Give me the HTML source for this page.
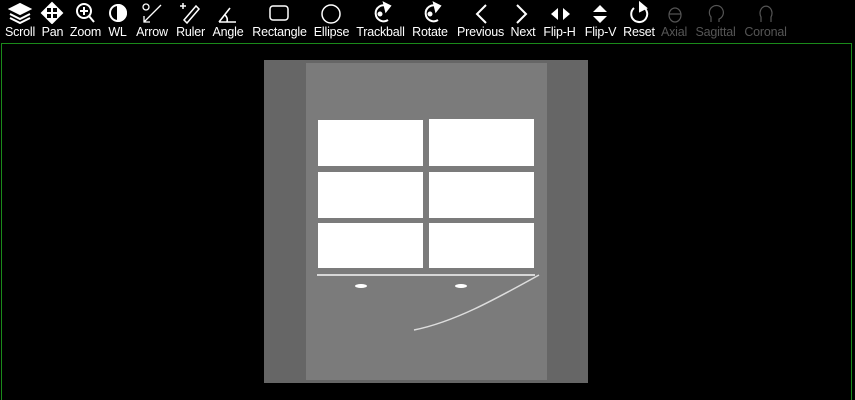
<!DOCTYPE html>
<html style="overflow:hidden;height:400px"><head><meta charset="utf-8"><style>
body{margin:0;width:855px;height:400px;background:#000;overflow:hidden;position:relative;font-family:"Liberation Sans",sans-serif}
.l{position:absolute;top:25px;font-size:12.5px;color:#fff;text-align:center;white-space:nowrap;letter-spacing:-0.2px}
.d{color:#555}
.vp{position:absolute;left:1px;top:43px;width:849px;height:356px;border:1px solid #1a8a1a;border-bottom:none}
</style></head><body>
<div class="vp"></div>
<svg width="855" height="24" style="position:absolute;left:0;top:0" fill="none" stroke="#fff" stroke-width="2">
<path d="M10 9 L20 4 L30 9 L20 14Z" fill="#fff"/><path d="M10 14 L20 19 L30 14" /><path d="M10 18 L20 23 L30 18"/>
<path d="M52 4 V22 M43 13 H61" /><path d="M48 7 L52 3 L56 7Z M48 19 L52 23 L56 19Z M46 9 L42 13 L46 17Z M58 9 L62 13 L58 17Z" fill="#fff"/>
<circle cx="84" cy="11" r="7"/><path d="M89 16 L94 22 M84 7 V15 M80 11 H88"/>
<circle cx="118" cy="13" r="8"/><path d="M118 5 A8 8 0 0 1 118 21Z" fill="#fff"/>
<g stroke-width="1.3"><circle cx="146" cy="7" r="3"/><path d="M161 5 L144 22 M144 16 V22 H150"/></g>
<g stroke-width="1.5"><path d="M180 6 H186 M183 3 V9"/><path d="M184 20 L196 6 L199 9 L187 23Z"/></g>
<path d="M219 22 H236 M219 22 L230 8 M225 15 A7 7 0 0 1 227 22" stroke-width="1.6"/>
<rect x="270" y="6" width="18" height="14" rx="3" stroke-width="1.5"/>
<circle cx="331" cy="14" r="9" stroke-width="1.5"/>
<path d="M387 6 A8 8 0 1 0 388 20" stroke-width="2"/><path d="M384 3 L390 6 L386 11Z" fill="#fff"/><circle cx="380" cy="14" r="1.5" fill="#fff"/>
<path d="M437 6 A8 8 0 1 0 438 20" stroke-width="2"/><path d="M434 3 L440 6 L436 11Z" fill="#fff"/><circle cx="430" cy="14" r="1.5" fill="#fff"/>
<path d="M486 5 L477 14 L486 23" stroke-width="2"/><path d="M517 5 L526 14 L517 23" stroke-width="2"/>
<path d="M558 8 L551 14 L558 20Z M563 8 L570 14 L563 20Z" fill="#fff" stroke="none"/>
<path d="M593 12 L600 5 L607 12Z M593 16 L600 23 L607 16Z" fill="#fff" stroke="none"/>
<path d="M634 8 A8 8 0 1 0 643 7" stroke-width="2"/><path d="M640 3 L646 8 L640 11Z" fill="#fff"/>
<g stroke="#555" stroke-width="1.2"><ellipse cx="675" cy="15" rx="6" ry="7"/><path d="M669 14 H681"/>
<path d="M711 22 V17 A7 7 0 1 1 719 19 V22"/><path d="M761 22 V17 A6 7 0 1 1 771 17 V22"/></g>
</svg>
<span class="l" style="left:3px;width:34px">Scroll</span>
<span class="l" style="left:41px;width:23px">Pan</span>
<span class="l" style="left:68px;width:35px">Zoom</span>
<span class="l" style="left:107px;width:21px">WL</span>
<span class="l" style="left:133px;width:38px">Arrow</span>
<span class="l" style="left:174px;width:33px">Ruler</span>
<span class="l" style="left:210px;width:36px">Angle</span>
<span class="l" style="left:250px;width:59px">Rectangle</span>
<span class="l" style="left:312px;width:39px">Ellipse</span>
<span class="l" style="left:354px;width:53px">Trackball</span>
<span class="l" style="left:410px;width:40px">Rotate</span>
<span class="l" style="left:453px;width:55px">Previous</span>
<span class="l" style="left:508px;width:30px">Next</span>
<span class="l" style="left:540px;width:39px">Flip-H</span>
<span class="l" style="left:582px;width:37px">Flip-V</span>
<span class="l" style="left:622px;width:34px">Reset</span>
<span class="l d" style="left:659px;width:30px">Axial</span>
<span class="l d" style="left:692px;width:47px">Sagittal</span>
<span class="l d" style="left:742px;width:47px">Coronal</span>

<svg width="324" height="323" style="position:absolute;left:264px;top:60px">
<rect width="324" height="323" fill="#666"/>
<rect x="42" y="3" width="241" height="317" fill="#7b7b7b"/>
<g fill="#fff">
<rect x="54" y="60" width="105" height="46"/><rect x="165" y="59" width="105" height="47"/>
<rect x="54" y="112" width="105" height="46"/><rect x="165" y="112" width="105" height="46"/>
<rect x="54" y="163" width="105" height="45"/><rect x="165" y="163" width="105" height="45"/>
<rect x="53" y="214" width="218" height="2" opacity="0.7"/>
<ellipse cx="97" cy="226" rx="6" ry="2"/><ellipse cx="197" cy="226" rx="6" ry="2"/>
</g>
<path d="M150 270 C190 262 230 240 275 215" stroke="#ddd" stroke-width="1.5" fill="none"/>
</svg>
</body></html>
